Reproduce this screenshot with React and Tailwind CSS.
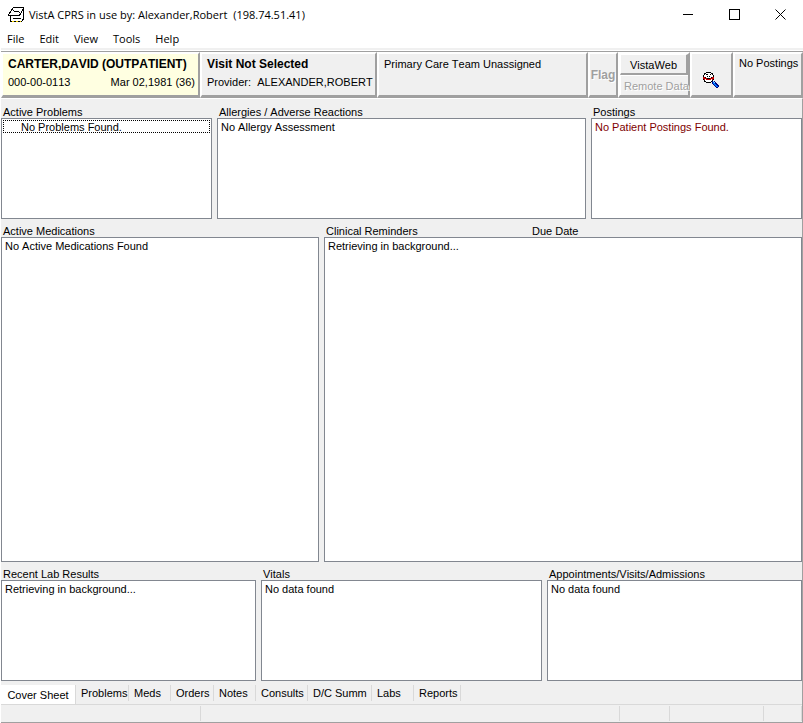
import React from "react";

const bevel =
  "border-t-2 border-l-2 border-r-2 border-b-[3px] border-t-white border-l-white border-r-[#a0a0a0] border-b-[#a0a0a0]";

function AppIcon() {
  return (
    <svg width="17" height="17" viewBox="0 0 17 17" fill="none" stroke="#000" shapeRendering="crispEdges" aria-hidden="true">
      <path d="M5 1.5h11M0 9.5h12M15.5 1v13M2 15.5h12M2.5 10v5M14.5 13v2" />
      <path d="M5.5 1L0.5 9M15.5 2L11.5 9.5" />
      <path d="M6 5.5h5M5 4.5h1M11 6.5h1M5 12.5h8" />
      <path d="M4 15.5h2M8 15.5h2M12 15.5h1" stroke="#f5d400" />
    </svg>
  );
}

function SearchIcon() {
  return (
    <svg width="16" height="16" viewBox="0 0 16 16" shapeRendering="crispEdges" aria-hidden="true">
      <path d="M3 0h5v1h2v2h1v5h-1v2h-2v1H3v-1H1V8H0V3h1V1h2z" fill="#000" />
      <path d="M3 1h5v1h1v1h1v5H9v1H8v1H3V9H2V8H1V3h1V2h1z" fill="#fff" />
      <path d="M0 5h2v1h7V5h2v2h-1v1H9V7H8v1H3V7H2v1H1V7H0z" fill="#c00000" />
      <path d="M3 2h2v1H3zM7 2h1v1H7zM4 4h1v1H4zM6 4h1v1H6zM2 5h1v1H2zM8 5h1v1H8zM4 6h3v1H4z" fill="#000" />
      <path d="M9 9h3v1h1v1h1v1h1v1h1v2h-1v1h-2v-1h-1v-1h-1v-1h-1v-1H9z" fill="#000080" />
      <path d="M10 10h1v1h1v1h1v1h1v1h1v1h-2v-1h-1v-1h-1v-1h-1z" fill="#0078ff" />
      <path d="M10 9h1v1h-1zM11 10h1v1h-1z" fill="#8fe0ff" />
    </svg>
  );
}

function Panel({ title, extra, item, focused, danger, grow }) {
  return (
    <section className={`flex min-w-0 flex-col ${grow ? "flex-1" : ""}`}>
      <div className="flex h-[18px] items-end pl-[2px] leading-[11px] whitespace-nowrap">
        <h2 className={extra ? "w-[206px]" : ""}>{title}</h2>
        {extra && <span>{extra}</span>}
      </div>
      <ul className={`border border-[#828790] bg-white p-px leading-[13px] ${grow ? "flex-1" : "h-[101px]"}`}>
        <li
          className={`border border-dotted ${focused ? "border-black pl-[17px]" : "border-transparent pl-px"} ${
            danger ? "text-[#800000]" : ""
          }`}
        >
          <span className="block h-[11px] leading-[12px]">{item}</span>
        </li>
      </ul>
    </section>
  );
}

const tabs = [
  ["Problems", "w-[53px]"],
  ["Meds", "w-[42px]"],
  ["Orders", "w-[43px]"],
  ["Notes", "w-[42px]"],
  ["Consults", "w-[52px]"],
  ["D/C Summ", "w-[64px]"],
  ["Labs", "w-[42px]"],
  ["Reports", "w-[47px]"],
];

export default function App() {
  return (
    <div className="flex min-h-screen flex-col bg-white font-['Liberation_Sans',Arial,sans-serif] text-[11px] text-black [font-kerning:none]">
      <header className="font-['Open_Sans','Noto_Sans',sans-serif] text-[11px]">
        <div className="flex h-[29px] items-center pl-2">
          <AppIcon />
          <h1 className="flex-1 pt-px pl-1 whitespace-pre">VistA CPRS in use by: Alexander,Robert  (198.74.51.41)</h1>
          <button aria-label="Minimize" className="flex h-7 w-[46px] items-center justify-center">
            <svg width="11" height="11" stroke="#000" shapeRendering="crispEdges"><path d="M0 5.5h10" /></svg>
          </button>
          <button aria-label="Maximize" className="flex h-7 w-[46px] items-center justify-center">
            <svg width="11" height="11" fill="none" stroke="#000" shapeRendering="crispEdges"><path d="M.5.5h10v10h-10z" /></svg>
          </button>
          <button aria-label="Close" className="flex h-7 w-[46px] items-center justify-center">
            <svg width="11" height="11" stroke="#000"><path d="M.5.5l10 10M10.5.5l-10 10" /></svg>
          </button>
        </div>
        <nav className="flex h-[19px] items-center gap-[15px] pl-[7px]">
          {["File", "Edit", "View", "Tools", "Help"].map((m) => (
            <button key={m} className="leading-[21px]">{m}</button>
          ))}
        </nav>
      </header>

      <main className="ml-px flex flex-1 flex-col border-b border-[#a0a0a0] bg-[#f0f0f0]">
        <div className="h-[3px] border-b border-white" />
        <div className="grid h-[47px] grid-cols-[199px_177px_1fr_30px_72px_43px_70px] border-t border-[#a0a0a0] text-left leading-[14px] whitespace-nowrap">
          <button className={`${bevel} flex flex-col gap-1 bg-[#ffffe1] pt-[3px] pr-[3px] pl-[5px] text-left`}>
            <b className="text-[12px]">CARTER,DAVID (OUTPATIENT)</b>
            <span className="flex w-full justify-between"><span>000-00-0113</span><span>Mar 02,1981 (36)</span></span>
          </button>
          <button className={`${bevel} flex flex-col gap-1 pt-[3px] pl-[5px] text-left`}>
            <b className="text-[12px]">Visit Not Selected</b>
            <span className="whitespace-pre">Provider:  ALEXANDER,ROBERT</span>
          </button>
          <button className={`${bevel} flex items-start pt-[3px] pl-[5px] text-left`}>Primary Care Team Unassigned</button>
          <button
            disabled
            className={`${bevel} flex items-center justify-center text-[12px] font-bold text-[#a0a0a0] [text-shadow:1px_1px_0_#fff]`}
          >
            Flag
          </button>
          <div className={`${bevel} flex flex-col`}>
            <button className="h-[21px] border-t border-r-2 border-b-2 border-l border-t-white border-r-[#a0a0a0] border-b-[#a0a0a0] border-l-white text-center leading-[20px]">
              VistaWeb
            </button>
            <button
              disabled
              className="flex-1 border-t border-l border-white pl-[3px] text-left leading-[18px] text-[#a0a0a0] [text-shadow:1px_1px_0_#fff]"
            >
              Remote Data
            </button>
          </div>
          <button aria-label="Search" className={`${bevel} flex items-center justify-center pt-[10px] pr-[2px]`}>
            <SearchIcon />
          </button>
          <button className={`${bevel} flex items-start pt-[2px] pl-1`}>No Postings</button>
        </div>

        <div className="flex flex-1 flex-col border-t border-r border-t-white border-r-[#a0a0a0]">
          <div className="grid grid-cols-[211fr_369fr_211fr] gap-[5px] pt-[1px]">
            <Panel title="Active Problems" item="No Problems Found." focused />
            <Panel title="Allergies / Adverse Reactions" item="No Allergy Assessment" />
            <Panel title="Postings" item="No Patient Postings Found." danger />
          </div>
          <div className="grid flex-1 grid-cols-[318fr_478fr] gap-[5px]">
            <Panel title="Active Medications" item="No Active Medications Found" grow />
            <Panel title="Clinical Reminders" extra="Due Date" item="Retrieving in background..." grow />
          </div>
          <div className="grid grid-cols-[255fr_281fr_255fr] gap-[5px]">
            <Panel title="Recent Lab Results" item="Retrieving in background..." />
            <Panel title="Vitals" item="No data found" />
            <Panel title="Appointments/Visits/Admissions" item="No data found" />
          </div>

          <nav className="flex h-[23px] items-start pt-1 leading-[15px] whitespace-nowrap">
            <button className="h-[19px] w-[75px] border-r border-[#d9d9d9] bg-white pt-[2px] text-center">Cover Sheet</button>
            {tabs.map(([name, width]) => (
              <button key={name} className={`${width} h-4 border-r border-[#d9d9d9] pl-[5px] text-left`}>{name}</button>
            ))}
          </nav>
          <footer className="flex h-[18px] border-t border-[#d9d9d9] py-px">
            <span className="w-[200px] border-r border-[#d9d9d9]" />
            <span className="flex-1 border-r border-[#d9d9d9]" />
            <span className="w-[50px] border-r border-[#d9d9d9]" />
            <span className="w-[94px] border-r border-[#d9d9d9]" />
            <span className="w-[38px] border-r border-[#d9d9d9]" />
          </footer>
        </div>
      </main>
    </div>
  );
}
